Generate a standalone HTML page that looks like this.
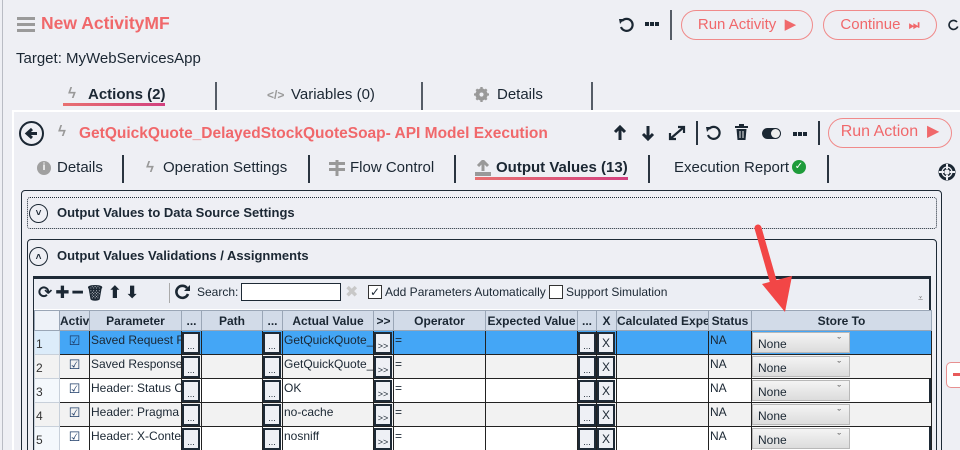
<!DOCTYPE html>
<html><head><meta charset="utf-8"><style>
*{box-sizing:border-box;margin:0;padding:0}
html{overflow:hidden;width:960px;height:450px}
body{width:960px;height:450px;overflow:hidden;background:#eeeff4;font-family:"Liberation Sans","DejaVu Sans",sans-serif;position:relative;color:#1b2733}
.a{position:absolute;white-space:nowrap}
.red{color:#f0686b}
.btn{position:absolute;border:1.5px solid #f08a8a;border-radius:15px;color:#f0686b;font-size:15px;text-align:center}
.vd{position:absolute;width:2px;background:#555c66}
.vt{position:absolute;width:1.5px;background:#2a3440}
.grid{position:absolute;left:33px;top:276px;width:898px;height:174px;border-top:3px solid #1e2a36;border-left:1px solid #1e2a36;border-right:2px solid #1e2a36;background:#fff}
table{border-collapse:collapse;position:absolute;left:34px;top:310px;width:897px;font-size:12px;table-layout:fixed}
td,th{border:1px solid #222;height:24px;overflow:hidden;white-space:nowrap;padding:0 1px;vertical-align:top}
th{height:20px;background:#d2dbe8;font-weight:bold;font-size:12px;text-align:center;border-color:#9aa6b6;vertical-align:middle;padding:0}
td{padding-top:2px}
td.b{padding:0}
.rn{background:#f4f8fc;border-color:#c8d0da;color:#333;font-size:12px;padding-top:6px!important}
.sel td{background:#44a6f6}
.sel td.rn{background:#dcecfa}
.g td{background:#f2f2f2}
.bt{display:block;width:18px;height:22px;border:2px solid #1e2a36;background:#eef0f5;font-size:9px;text-align:center;line-height:24px;margin-top:1px}
.cb{width:98px;height:21px;border:1px solid #b8b8b8;background:linear-gradient(#f4f4f4,#dcdcdc);font-size:12px;padding:4px 0 0 5px;position:relative;margin:1px 0 0 0}
.cb:after{content:"ˇ";position:absolute;right:8px;top:3px;font-size:11px;color:#555}
.chk{color:#1b3a66;font-size:13px;text-align:center}
</style></head><body>
<div class="a" style="left:2px;top:0;width:1px;height:450px;background:#b9bcc4"></div>
<div class="a" style="left:17px;top:17px;width:18px;height:3px;background:#9a9a9a;box-shadow:0 6px 0 #9a9a9a,0 12px 0 #9a9a9a"></div>
<div class="a red" style="left:41px;top:13px;font-size:17.5px;font-weight:bold">New ActivityMF</div>
<svg class="a" style="left:618px;top:17px" width="16" height="16" viewBox="0 0 16 16"><path d="M4 4 A6 6 0 1 1 3 10" fill="none" stroke="#1b2733" stroke-width="2.2"/><path d="M1 2 L6 2 L2 7 Z" fill="#1b2733"/></svg>
<div class="a" style="left:645px;top:22px;width:4px;height:4px;background:#1b2733;box-shadow:5px 0 0 #1b2733,10px 0 0 #1b2733"></div>
<div class="vd" style="left:670px;top:10px;height:30px"></div>
<div class="btn" style="left:681px;top:10px;width:132px;height:30px;line-height:27px">Run Activity &nbsp;▶</div>
<div class="btn" style="left:823px;top:10px;width:114px;height:30px;line-height:27px">Continue &nbsp;<b style="font-size:12px">⏭</b></div>
<svg class="a" style="left:948px;top:17px" width="12" height="16" viewBox="0 0 16 16"><path d="M12 4 A6 6 0 1 0 13 10" fill="none" stroke="#1b2733" stroke-width="2.2"/></svg>
<div class="a" style="left:16px;top:50px;font-size:15px">Target: MyWebServicesApp</div>
<div class="a" style="left:68px;top:85px;font-size:15px;color:#999;font-weight:bold">ϟ</div>
<div class="a" style="left:88px;top:86px;font-size:15px;font-weight:bold">Actions (2)</div>
<div class="a" style="left:63px;top:103px;width:102px;height:3px;background:linear-gradient(90deg,#e87070,#d2407f)"></div>
<div class="vd" style="left:215px;top:82px;height:28px"></div>
<div class="a" style="left:267px;top:88px;font-size:12px;color:#999;font-weight:bold">&lt;/&gt;</div>
<div class="a" style="left:291px;top:86px;font-size:15px">Variables (0)</div>
<div class="vd" style="left:421px;top:82px;height:28px"></div>
<svg class="a" style="left:474px;top:87px" width="15" height="15" viewBox="0 0 16 16"><circle cx="8" cy="8" r="5" fill="none" stroke="#999" stroke-width="3"/><path d="M8 0V16M0 8H16M2.5 2.5L13.5 13.5M13.5 2.5L2.5 13.5" stroke="#999" stroke-width="2.5"/><circle cx="8" cy="8" r="2.2" fill="#eeeff4"/></svg>
<div class="a" style="left:497px;top:86px;font-size:15px">Details</div>
<div class="vd" style="left:591px;top:82px;height:28px"></div>
<div class="a" style="left:12px;top:110px;width:948px;height:340px;border-top:2px solid #fff;border-left:2px solid #fff"></div>
<div class="a" style="left:19px;top:121px;width:25px;height:25px;border:2px solid #1b2733;border-radius:50%"></div>
<svg class="a" style="left:24px;top:126px" width="15" height="15" viewBox="0 0 15 15"><path d="M13 7.5 H4 M8 3 L3 7.5 L8 12" fill="none" stroke="#1b2733" stroke-width="3"/></svg>
<div class="a" style="left:58px;top:123px;font-size:15px;color:#999;font-weight:bold">ϟ</div>
<div class="a red" style="left:79px;top:125px;font-size:15.5px;font-weight:bold">GetQuickQuote_DelayedStockQuoteSoap- API Model Execution</div>
<svg class="a" style="left:612px;top:124px" width="100" height="18" viewBox="0 0 100 18"><path d="M8 16 V4 M3 8 L8 3 L13 8" fill="none" stroke="#1b2733" stroke-width="3"/><path d="M36 2 V14 M31 10 L36 15 L41 10" fill="none" stroke="#1b2733" stroke-width="3"/><path d="M58 15 L72 3 M66 3 H72 V9 M58 9 V15 H64" fill="none" stroke="#1b2733" stroke-width="2.2"/></svg>
<div class="vt" style="left:696px;top:121px;height:24px"></div>
<svg class="a" style="left:705px;top:125px" width="16" height="16" viewBox="0 0 16 16"><path d="M4 4 A6 6 0 1 1 3 10" fill="none" stroke="#1b2733" stroke-width="2.2"/><path d="M1 2 L6 2 L2 7 Z" fill="#1b2733"/></svg>
<svg class="a" style="left:735px;top:124px" width="13" height="16" viewBox="0 0 13 16"><rect x="0" y="2" width="13" height="2" fill="#1b2733"/><rect x="4" y="0" width="5" height="2" fill="#1b2733"/><path d="M1.5 5 H11.5 L10.5 16 H2.5 Z" fill="#1b2733"/><path d="M5 7 V14 M8 7 V14" stroke="#eee" stroke-width="1"/></svg>
<div class="a" style="left:762px;top:128px;width:19px;height:11px;border-radius:6px;background:#1b2733"><div style="position:absolute;right:1px;top:1px;width:9px;height:9px;border-radius:50%;background:#eee"></div></div>
<div class="a" style="left:793px;top:132px;width:4px;height:4px;background:#1b2733;box-shadow:5px 0 0 #1b2733,10px 0 0 #1b2733"></div>
<div class="vt" style="left:818px;top:121px;height:24px"></div>
<div class="btn" style="left:828px;top:118px;width:124px;height:30px;line-height:26px;font-size:16px">Run Action &nbsp;▶</div>
<div class="a" style="left:37px;top:161px;width:14px;height:14px;border-radius:50%;background:#a0a0a0;color:#fff;font-size:10px;font-weight:bold;text-align:center;line-height:14px">i</div>
<div class="a" style="left:57px;top:159px;font-size:15px">Details</div>
<div class="vt" style="left:122px;top:155px;height:28px"></div>
<div class="a" style="left:146px;top:159px;font-size:15px;color:#999;font-weight:bold">ϟ</div>
<div class="a" style="left:163px;top:159px;font-size:15px">Operation Settings</div>
<div class="vt" style="left:308px;top:155px;height:28px"></div>
<svg class="a" style="left:329px;top:160px" width="16" height="16" viewBox="0 0 16 16"><rect x="0" y="2" width="16" height="3" fill="#999"/><rect x="0" y="8" width="16" height="3" fill="#999"/><rect x="6.5" y="0" width="3" height="16" fill="#999"/></svg>
<div class="a" style="left:350px;top:159px;font-size:15px">Flow Control</div>
<div class="vt" style="left:454px;top:155px;height:28px"></div>
<svg class="a" style="left:475px;top:160px" width="16" height="16" viewBox="0 0 16 16"><path d="M8 11 V2 M3 6 L8 1 L13 6" fill="none" stroke="#999" stroke-width="3"/><rect x="0" y="12" width="16" height="4" fill="#999"/></svg>
<div class="a" style="left:496px;top:159px;font-size:15px;font-weight:bold">Output Values (13)</div>
<div class="a" style="left:475px;top:177px;width:153px;height:3px;background:linear-gradient(90deg,#e87070,#d2407f)"></div>
<div class="vt" style="left:648px;top:155px;height:28px"></div>
<div class="a" style="left:674px;top:159px;font-size:15px">Execution Report</div>
<div class="a" style="left:792px;top:160px;width:14px;height:14px;border-radius:50%;background:#1e9b3a;color:#fff;font-size:10px;text-align:center;line-height:14px;font-weight:bold">✓</div>
<div class="vt" style="left:827px;top:155px;height:28px"></div>
<svg class="a" style="left:938px;top:163px" width="18" height="18" viewBox="0 0 18 18"><circle cx="9" cy="9" r="7" fill="none" stroke="#1b2733" stroke-width="3"/><circle cx="9" cy="9" r="3.5" fill="none" stroke="#1b2733" stroke-width="1.5"/><path d="M9 1V6M9 12V17M1 9H6M12 9H17" stroke="#eeeff4" stroke-width="2"/></svg>
<div class="a" style="left:21px;top:190px;width:921px;height:270px;border:1.5px solid #1e2a36;border-radius:4px"></div>
<div class="a" style="left:27px;top:197px;width:910px;height:32px;border:1.5px dotted #1e2a36;border-radius:3px"></div>
<div class="a" style="left:29px;top:204px;width:19px;height:19px;border:1.5px solid #1b2733;border-radius:50%;font-size:10px;text-align:center;line-height:17px;font-weight:bold">˅</div>
<div class="a" style="left:57px;top:205px;font-size:13px;font-weight:bold">Output Values to Data Source Settings</div>
<div class="a" style="left:27px;top:239px;width:910px;height:220px;border:1.5px solid #1e2a36;border-radius:4px"></div>
<div class="a" style="left:29px;top:247px;width:19px;height:19px;border:1.5px solid #1b2733;border-radius:50%;font-size:10px;text-align:center;line-height:19px;font-weight:bold">˄</div>
<div class="a" style="left:57px;top:248px;font-size:13px;font-weight:bold">Output Values Validations / Assignments</div>
<div class="grid"></div>
<div class="a" style="left:34px;top:279px;width:895px;height:30px;background:#eceef4"></div>
<div class="a" style="left:38px;top:283px;font-size:17px;font-weight:bold;letter-spacing:3px">⟳✚━<span style="font-size:15px">🗑</span>⬆⬇</div>
<div class="a" style="left:169px;top:283px;width:1px;height:20px;background:#aaa"></div>
<svg class="a" style="left:175px;top:284px" width="16" height="16" viewBox="0 0 16 16"><path d="M12 4 A6 6 0 1 0 13 10" fill="none" stroke="#1b2733" stroke-width="2.6"/><path d="M15 1 V7 H9 Z" fill="#1b2733"/></svg>
<div class="a" style="left:197px;top:285px;font-size:12px">Search:</div>
<div class="a" style="left:241px;top:283px;width:100px;height:18px;border:1px solid #1e2a36;background:#fff"></div>
<div class="a" style="left:345px;top:282px;font-size:16px;color:#c8c8c8;font-weight:bold">✖</div>
<div class="a" style="left:368px;top:285px;width:14px;height:14px;border:1px solid #333;background:#fff;font-size:12px;line-height:12px;text-align:center">✓</div>
<div class="a" style="left:385px;top:285px;font-size:12px">Add Parameters Automatically</div>
<div class="a" style="left:549px;top:285px;width:14px;height:14px;border:1px solid #333;background:#fff"></div>
<div class="a" style="left:566px;top:285px;font-size:12px">Support Simulation</div>
<div class="a" style="left:918px;top:293px;font-size:9px;color:#777">⩡</div>
<table>
<colgroup><col style="width:25px"><col style="width:30px"><col style="width:92px"><col style="width:20px"><col style="width:61px"><col style="width:20px"><col style="width:91px"><col style="width:20px"><col style="width:92px"><col style="width:92px"><col style="width:19px"><col style="width:20px"><col style="width:92px"><col style="width:43px"><col style="width:180px"></colgroup>
<tr><th style="background:#eef2f8"></th><th>Activ</th><th>Parameter</th><th>...</th><th>Path</th><th>...</th><th>Actual Value</th><th>&gt;&gt;</th><th>Operator</th><th>Expected Value</th><th>...</th><th>X</th><th style="text-align:left">Calculated Expe</th><th>Status</th><th>Store To</th></tr>
<tr class="sel"><td class="rn">1</td><td class="chk">☑</td><td>Saved Request F</td><td class="b"><span class="bt">...</span></td><td></td><td class="b"><span class="bt">...</span></td><td>GetQuickQuote_</td><td class="b"><span class="bt">&gt;&gt;</span></td><td>=</td><td></td><td class="b"><span class="bt">...</span></td><td class="b"><span class="bt" style="font-size:12px;line-height:19px">X</span></td><td></td><td>NA</td><td class="b"><div class="cb">None</div></td></tr>
<tr class="g"><td class="rn">2</td><td class="chk">☑</td><td>Saved Response</td><td class="b"><span class="bt">...</span></td><td></td><td class="b"><span class="bt">...</span></td><td>GetQuickQuote_</td><td class="b"><span class="bt">&gt;&gt;</span></td><td>=</td><td></td><td class="b"><span class="bt">...</span></td><td class="b"><span class="bt" style="font-size:12px;line-height:19px">X</span></td><td></td><td>NA</td><td class="b"><div class="cb">None</div></td></tr>
<tr><td class="rn">3</td><td class="chk">☑</td><td>Header: Status C</td><td class="b"><span class="bt">...</span></td><td></td><td class="b"><span class="bt">...</span></td><td>OK</td><td class="b"><span class="bt">&gt;&gt;</span></td><td>=</td><td></td><td class="b"><span class="bt">...</span></td><td class="b"><span class="bt" style="font-size:12px;line-height:19px">X</span></td><td></td><td>NA</td><td class="b"><div class="cb">None</div></td></tr>
<tr class="g"><td class="rn">4</td><td class="chk">☑</td><td>Header: Pragma</td><td class="b"><span class="bt">...</span></td><td></td><td class="b"><span class="bt">...</span></td><td>no-cache</td><td class="b"><span class="bt">&gt;&gt;</span></td><td>=</td><td></td><td class="b"><span class="bt">...</span></td><td class="b"><span class="bt" style="font-size:12px;line-height:19px">X</span></td><td></td><td>NA</td><td class="b"><div class="cb">None</div></td></tr>
<tr><td class="rn">5</td><td class="chk">☑</td><td>Header: X-Conte</td><td class="b"><span class="bt">...</span></td><td></td><td class="b"><span class="bt">...</span></td><td>nosniff</td><td class="b"><span class="bt">&gt;&gt;</span></td><td>=</td><td></td><td class="b"><span class="bt">...</span></td><td class="b"><span class="bt" style="font-size:12px;line-height:19px">X</span></td><td></td><td>NA</td><td class="b"><div class="cb">None</div></td></tr>
</table>
<div class="a" style="left:946px;top:362px;width:20px;height:26px;border:1.5px solid #e89090;border-radius:5px;background:#fff"><div style="position:absolute;left:6px;top:10px;width:10px;height:3px;background:#e85a5a"></div></div>
<svg class="a" style="left:740px;top:220px" width="60" height="100"><line x1="18" y1="8" x2="38" y2="78" stroke="#f24646" stroke-width="7" stroke-linecap="round"/><polygon points="22,64 52,56 45,92" fill="#f24646"/></svg>
</body></html>
